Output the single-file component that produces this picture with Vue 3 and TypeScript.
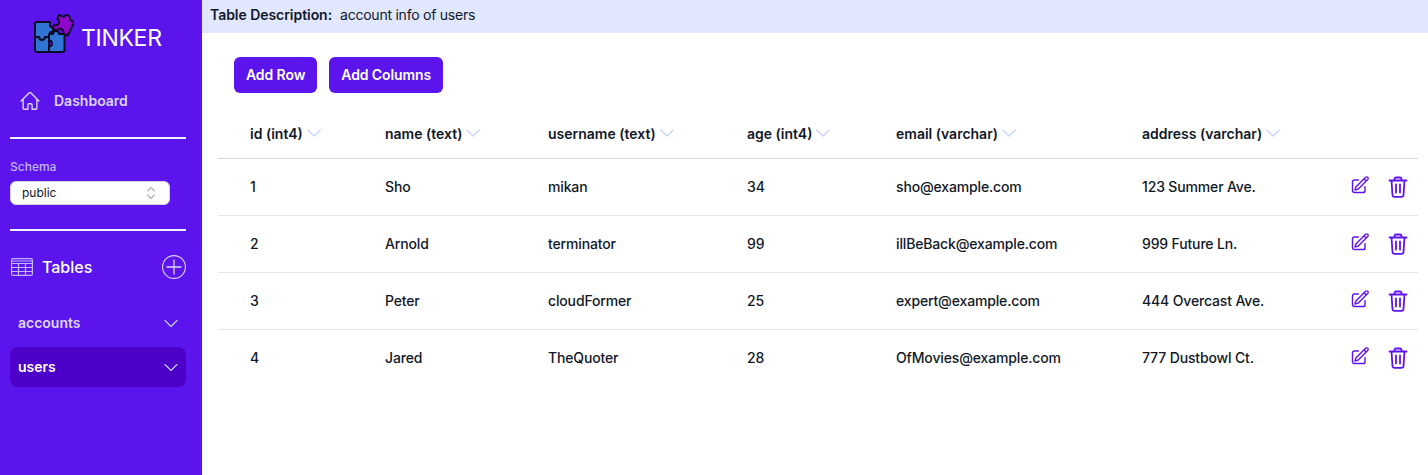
<template>
  <div class="layout">
    <aside class="sidebar">
      <div class="brand">
        <svg class="logo" viewBox="0 0 40 40" width="40" height="40">
          <g stroke="#0d0a24" stroke-width="1.900" stroke-linejoin="round" fill="#3075d6">
            <path d="M1 11a2 2 0 0 1 2-2H16V13.500a3 3 0 1 1 0 6V24H11a3 3 0 0 1-6 0H1Z" />
            <path d="M1 24H5a3 3 0 0 0 6 0H15V39H3a2 2 0 0 1-2-2Z" />
            <path d="M15 21H19a3 3 0 1 1 6 0H30.500V37a2 2 0 0 1-2 2H15V33.500a3 3 0 1 0 0-6Z" />
          </g>
          <path
            transform="translate(29.500 12) rotate(26) scale(1.120)"
            d="M-7.500-6.500H-3a3 3 0 1 1 6 0H7.500V7H3a3 3 0 0 0-6 0H-7.500V3.500a3 3 0 1 0 0-6Z"
            fill="#8f05c9"
            stroke="#0d0a24"
            stroke-width="1.700"
            stroke-linejoin="round"
          />
        </svg>
        <span class="brand-name">TINKER</span>
      </div>

      <nav class="nav-item">
        <svg class="home-icon" viewBox="0 0 24 24" width="22" height="22" fill="none" stroke="currentColor" stroke-width="1.5" stroke-linecap="round" stroke-linejoin="round">
          <path d="M2.250 12 11.200 3.050a1.125 1.125 0 0 1 1.600 0L21.750 12M4.500 9.750V19.875c0 .621.504 1.125 1.125 1.125H9.750v-4.875c0-.621.504-1.125 1.125-1.125h2.250c.621 0 1.125.504 1.125 1.125V21h4.125c.621 0 1.125-.504 1.125-1.125V9.750" />
        </svg>
        <span class="lift">Dashboard</span>
      </nav>

      <hr class="divider" />

      <div class="schema">
        <label class="schema-label">Schema</label>
        <div class="schema-select">
          <span class="lift">public</span>
          <svg viewBox="0 0 12 18" width="10" height="16" fill="none" stroke="#a3a3b5" stroke-width="1.4" stroke-linecap="round" stroke-linejoin="round">
            <path d="M2 6.500 6 2.500l4 4M2 11.500l4 4 4-4" />
          </svg>
        </div>
      </div>

      <hr class="divider" />

      <div class="tables-head">
        <svg class="table-icon" viewBox="0 0 22 18" width="22" height="18" fill="none" stroke="#c4b5fd" stroke-width="1.200">
          <rect x="0.600" y="0.600" width="20.800" height="16.800" rx="1.500" />
          <path d="M0.600 3H21.400M0.600 5.500H21.400M0.600 9.500H21.400M0.600 13.500H21.400M7.500 5.500V17.400M14.500 5.500V17.400" />
        </svg>
        <span class="tables-title">Tables</span>
        <svg class="plus-icon" viewBox="0 0 24 24" width="24" height="24" fill="none" stroke="#ddd6fe" stroke-width="1.100">
          <circle cx="12" cy="12" r="11.400" />
          <path d="M12 4.500V19.500M4.500 12H19.500" stroke-width="1.300" />
        </svg>
      </div>

      <div
        v-for="t in sideTables"
        :key="t"
        class="table-link"
        :class="{ active: t === 'users' }"
      >
        <span class="lift">{{ t }}</span>
        <svg viewBox="0 0 14 9" width="14" height="9" fill="none" stroke="#c7d2fe" stroke-width="1.100" stroke-linecap="round" stroke-linejoin="round">
          <path d="M1 1.500 7 7.500l6-6" />
        </svg>
      </div>
    </aside>

    <main class="content">
      <div class="description">
        <strong>Table Description:</strong>
        <span class="desc-text">account info of users</span>
      </div>

      <div class="actions">
        <button class="btn">Add Row</button>
        <button class="btn">Add Columns</button>
      </div>

      <table class="grid">
        <colgroup>
          <col class="c-id" />
          <col class="c-name" />
          <col class="c-username" />
          <col class="c-age" />
          <col class="c-email" />
          <col class="c-address" />
          <col />
        </colgroup>
        <thead>
          <tr>
            <th v-for="h in headers" :key="h">
              <span class="th-inner">
                {{ h }}
                <svg viewBox="0 0 14 8" width="14" height="8" fill="none" stroke="#c7d2fe" stroke-width="1.300" stroke-linecap="round" stroke-linejoin="round">
                  <path d="M.8 1 7 7l6.200-6" />
                </svg>
              </span>
            </th>
            <th></th>
          </tr>
        </thead>
        <tbody>
          <tr v-for="row in rows" :key="row.id">
            <td>{{ row.id }}</td>
            <td>{{ row.name }}</td>
            <td>{{ row.username }}</td>
            <td>{{ row.age }}</td>
            <td>{{ row.email }}</td>
            <td>{{ row.address }}</td>
            <td class="row-actions">
              <svg class="edit" viewBox="0 0 24 24" width="20" height="20" fill="none" stroke="#5f14ee" stroke-width="1.700" stroke-linecap="round" stroke-linejoin="round">
                <path d="m16.860 4.490 1.690-1.690a1.875 1.875 0 1 1 2.650 2.650L10.580 16.070a4.500 4.500 0 0 1-1.900 1.130L6 18l.8-2.680a4.500 4.500 0 0 1 1.130-1.900l8.930-8.930Zm0 0L19.500 7.130M18 14v4.750A2.250 2.250 0 0 1 15.750 21H5.250A2.250 2.250 0 0 1 3 18.750V8.250A2.250 2.250 0 0 1 5.250 6H10" />
              </svg>
              <svg viewBox="0 0 24 24" width="24" height="24" fill="none" stroke="#5f14ee" stroke-width="1.800" stroke-linecap="round" stroke-linejoin="round">
                <path d="M3.500 5.500h17M8.500 5.500V4a1.500 1.500 0 0 1 1.500-1.500h4A1.500 1.500 0 0 1 15.500 4v1.500M5.500 5.500l1 14.500a2 2 0 0 0 2 1.800h7a2 2 0 0 0 2-1.800l1-14.500M10 9.500v8M14 9.500v8" />
              </svg>
            </td>
          </tr>
        </tbody>
      </table>
    </main>
  </div>
</template>

<script setup lang="ts">
interface UserRow {
  id: number
  name: string
  username: string
  age: number
  email: string
  address: string
}

const sideTables: string[] = ['accounts', 'users']

const headers: string[] = [
  'id (int4)',
  'name (text)',
  'username (text)',
  'age (int4)',
  'email (varchar)',
  'address (varchar)'
]

const rows: UserRow[] = [
  { id: 1, name: 'Sho', username: 'mikan', age: 34, email: 'sho@example.com', address: '123 Summer Ave.' },
  { id: 2, name: 'Arnold', username: 'terminator', age: 99, email: 'illBeBack@example.com', address: '999 Future Ln.' },
  { id: 3, name: 'Peter', username: 'cloudFormer', age: 25, email: 'expert@example.com', address: '444 Overcast Ave.' },
  { id: 4, name: 'Jared', username: 'TheQuoter', age: 28, email: 'OfMovies@example.com', address: '777 Dustbowl Ct.' }
]
</script>

<style>
html,
body {
  margin: 0;
  background: #fff;
}
</style>

<style scoped>
.layout {
  display: flex;
  height: 475px;
  overflow: hidden;
  font-family: Inter, "Liberation Sans", sans-serif;
  color: #111827;
}

.sidebar {
  width: 202px;
  flex-shrink: 0;
  box-sizing: border-box;
  padding: 13px 16px 0 10px;
  background: #5b14ec;
  color: #fff;
}

/* Inter sits a touch low here compared to the icons next to it */
.lift {
  padding-bottom: 2px;
}

.brand {
  display: flex;
  align-items: center;
  gap: 7px;
  margin-left: 24px;
  height: 40px;
}

.brand-name {
  font-size: 23px;
  line-height: 48px;
  margin-top: 10px;
  letter-spacing: -0.3px;
}

.nav-item {
  display: flex;
  align-items: center;
  gap: 13px;
  margin: 37px 0 0 9px;
  height: 22px;
  font-size: 14px;
  font-weight: 600;
  color: #ddd6fe;
}

.divider {
  border: 0;
  height: 2px;
  margin: 0;
  background: #eef2ff;
}

.nav-item + .divider {
  margin-top: 25px;
}

.schema {
  padding-top: 20px;
  box-sizing: border-box;
  height: 90px;
}

.schema-label {
  display: block;
  font-size: 12px;
  line-height: 16px;
  font-weight: 500;
  color: #c4b5fd;
}

.schema-select {
  display: flex;
  align-items: center;
  justify-content: space-between;
  width: 160px;
  height: 24px;
  margin-top: 6px;
  padding: 0 13px 0 11px;
  box-sizing: border-box;
  border: 1px solid #d1d5db;
  border-radius: 6px;
  background: #fff;
  color: #111827;
  font-size: 12px;
}

.tables-head {
  display: flex;
  align-items: center;
  margin-top: 24px;
  height: 24px;
}

.table-icon {
  margin-left: 1px;
}

.tables-title {
  flex: 1;
  margin-left: 9px;
  font-size: 16px;
  font-weight: 500;
}

.table-link {
  display: flex;
  align-items: center;
  justify-content: space-between;
  height: 40px;
  padding: 0 8px;
  border-radius: 8px;
  font-size: 14px;
  font-weight: 600;
  color: #ddd6fe;
}

.tables-head + .table-link {
  margin-top: 24px;
}

.table-link + .table-link {
  margin-top: 4px;
}

.table-link.active {
  background: #4c00c8;
  color: #fff;
}

.content {
  flex: 1;
  min-width: 0;
}

.description {
  display: flex;
  gap: 8px;
  height: 33px;
  padding: 0 8px;
  margin-bottom: 24px;
  box-sizing: border-box;
  background: #e0e7ff;
  font-size: 14px;
  line-height: 30px;
}

.description strong {
  font-weight: 600;
  letter-spacing: -0.05px;
}

.desc-text {
  letter-spacing: -0.24px;
}

.actions {
  display: flex;
  gap: 12px;
  padding-left: 32px;
}

.btn {
  height: 36px;
  padding: 0 12px 2px;
  border: 0;
  border-radius: 6px;
  background: #5b14ec;
  color: #fff;
  font: 600 14px Inter, "Liberation Sans", sans-serif;
  letter-spacing: -0.1px;
}

.grid {
  width: 1200px;
  margin: 8px 0 0 16px;
  border-collapse: collapse;
  table-layout: fixed;
  font-size: 14px;
}

.c-id { width: 135px; }
.c-name { width: 163px; }
.c-username { width: 199px; }
.c-age { width: 149px; }
.c-email { width: 246px; }
.c-address { width: 196px; }

thead tr {
  height: 57px;
  border-bottom: 1px solid #d1d5db;
}

th {
  padding: 8px 0 0 32px;
  text-align: left;
  font-weight: 600;
}

.th-inner {
  display: inline-flex;
  align-items: center;
  gap: 4px;
  white-space: nowrap;
}

tbody tr {
  height: 57px;
  border-bottom: 1px solid #e5e7eb;
}

tbody tr:last-child {
  border-bottom: 0;
}

td {
  padding: 0 0 0 32px;
  font-weight: 500;
  letter-spacing: -0.15px;
  white-space: nowrap;
}

td.row-actions {
  padding-left: 44px;
}

.row-actions svg {
  vertical-align: middle;
}

.row-actions .edit {
  margin-bottom: 4px;
}

.row-actions svg + svg {
  margin-left: 16px;
}
</style>
